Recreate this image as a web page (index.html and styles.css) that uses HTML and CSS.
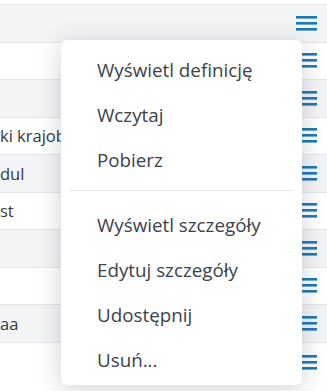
FILE: index.html
```html
<!DOCTYPE html>
<html>
<head>
<meta charset="utf-8">
<link rel="stylesheet" href="styles.css">
</head>
<body>
<div class="grid">
  <div class="top"></div>
  <div class="row gray"><span class="cell"></span><svg class="ham" viewBox="0 0 21 15"><rect y="0" width="21" height="2.6"/><rect y="6" width="21" height="2.6"/><rect y="12" width="21" height="2.6"/></svg></div>
  <div class="row"><span class="cell"></span><svg class="ham" viewBox="0 0 21 15"><rect y="0" width="21" height="2.6"/><rect y="6" width="21" height="2.6"/><rect y="12" width="21" height="2.6"/></svg></div>
  <div class="row gray"><span class="cell"></span><svg class="ham" viewBox="0 0 21 15"><rect y="0" width="21" height="2.6"/><rect y="6" width="21" height="2.6"/><rect y="12" width="21" height="2.6"/></svg></div>
  <div class="row"><span class="cell">ki krajobrazowe</span><svg class="ham" viewBox="0 0 21 15"><rect y="0" width="21" height="2.6"/><rect y="6" width="21" height="2.6"/><rect y="12" width="21" height="2.6"/></svg></div>
  <div class="row gray"><span class="cell">dul</span><svg class="ham" viewBox="0 0 21 15"><rect y="0" width="21" height="2.6"/><rect y="6" width="21" height="2.6"/><rect y="12" width="21" height="2.6"/></svg></div>
  <div class="row"><span class="cell">st</span><svg class="ham" viewBox="0 0 21 15"><rect y="0" width="21" height="2.6"/><rect y="6" width="21" height="2.6"/><rect y="12" width="21" height="2.6"/></svg></div>
  <div class="row gray"><span class="cell"></span><svg class="ham" viewBox="0 0 21 15"><rect y="0" width="21" height="2.6"/><rect y="6" width="21" height="2.6"/><rect y="12" width="21" height="2.6"/></svg></div>
  <div class="row"><span class="cell"></span><svg class="ham" viewBox="0 0 21 15"><rect y="0" width="21" height="2.6"/><rect y="6" width="21" height="2.6"/><rect y="12" width="21" height="2.6"/></svg></div>
  <div class="row gray"><span class="cell">aa</span><svg class="ham" viewBox="0 0 21 15"><rect y="0" width="21" height="2.6"/><rect y="6" width="21" height="2.6"/><rect y="12" width="21" height="2.6"/></svg></div>
  <div class="row last"><span class="cell"></span><svg class="ham" viewBox="0 0 21 15"><rect y="0" width="21" height="2.6"/><rect y="6" width="21" height="2.6"/><rect y="12" width="21" height="2.6"/></svg></div>
</div>
<div class="menu">
  <div class="item">Wyświetl definicję</div>
  <div class="item">Wczytaj</div>
  <div class="item">Pobierz</div>
  <div class="sep"></div>
  <div class="item">Wyświetl szczegóły</div>
  <div class="item">Edytuj szczegóły</div>
  <div class="item">Udostępnij</div>
  <div class="item">Usuń...</div>
</div>
</body>
</html>
```
FILE: styles.css
```css
html, body {
  margin: 0;
  padding: 0;
  background: #ffffff;
  overflow: hidden;
}
body {
  width: 327px;
  height: 391px;
  font-family: "Open Sans", "Noto Sans", sans-serif;
  position: relative;
}
.grid {
  display: flex;
  flex-direction: column;
}
.top {
  height: 5px;
  border-bottom: 1px solid #e6e8eb;
  box-sizing: border-box;
}
.row {
  height: 37.5px;
  box-sizing: border-box;
  border-bottom: 1px solid #e4e6e9;
  display: flex;
  align-items: center;
  justify-content: space-between;
  padding-right: 10px;
  background: #ffffff;
}
.row.gray {
  background: #f3f4f6;
}
.row.last {
  border-bottom: none;
  height: 60px;
  align-items: flex-start;
  padding-top: 12px;
}
.cell {
  font-size: 16.5px;
  color: #323b44;
  white-space: nowrap;
}
.ham {
  width: 21px;
  height: 15px;
  fill: #1c78b6;
  flex: none;
}
.menu {
  position: absolute;
  left: 61px;
  top: 40px;
  width: 241px;
  height: 345px;
  box-sizing: border-box;
  background: #ffffff;
  border-radius: 6px;
  box-shadow: 0 4px 24px rgba(40, 50, 70, 0.22);
  padding: 7px 8px 0 8px;
}
.item {
  height: 45px;
  display: flex;
  align-items: center;
  padding-left: 28px;
  font-size: 18.8px;
  color: #3a424b;
  white-space: nowrap;
}
.sep {
  height: 1px;
  background: #e6e8eb;
  margin: 8px 0 11px 0;
}
```
